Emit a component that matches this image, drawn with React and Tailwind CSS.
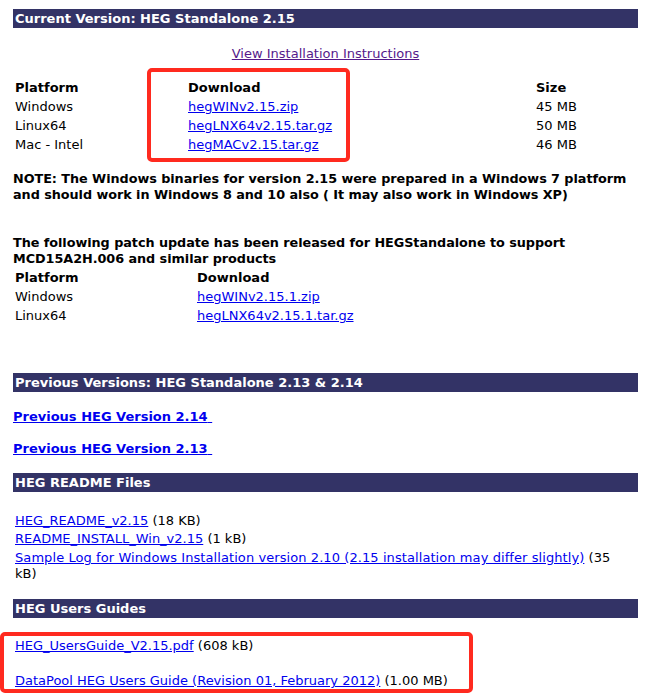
import React from "react";

const sans = { fontFamily: '"DejaVu Sans", Verdana, sans-serif' };

function Bar({ children, className = "" }) {
  return (
    <div
      className={`h-[19px] bg-[#333366] pl-[2px] text-[13px] font-bold leading-[19px] text-white ${className}`}
    >
      {children}
    </div>
  );
}

function A({ children, bold }) {
  return (
    <a
      href="#"
      className={`text-[#0000ee] underline ${bold ? "font-bold" : ""}`}
    >
      {children}
    </a>
  );
}

export default function App() {
  const current = [
    ["Windows", "hegWINv2.15.zip", "45 MB"],
    ["Linux64", "hegLNX64v2.15.tar.gz", "50 MB"],
    ["Mac - Intel", "hegMACv2.15.tar.gz", "46 MB"],
  ];
  const patch = [
    ["Windows", "hegWINv2.15.1.zip"],
    ["Linux64", "hegLNX64v2.15.1.tar.gz"],
  ];

  return (
    <div
      className="relative h-[695px] overflow-hidden bg-white pt-[9px] text-black"
      style={sans}
    >
      <div className="ml-[13px] w-[625px] text-[13px]">
        {/* CURRENT VERSION */}
        <Bar>Current Version: HEG Standalone 2.15</Bar>

        <div className="mt-[18px] text-center leading-[15px]">
          <a href="#" className="text-[#551a8b] underline">
            View Installation Instructions
          </a>
        </div>

        <div className="mt-[17px] pl-[2px]">
          <div className="flex h-[19px] items-center font-bold">
            <div className="w-[173px]">Platform</div>
            <div className="w-[348px]">Download</div>
            <div>Size</div>
          </div>
          {current.map((r) => (
            <div key={r[1]} className="flex h-[19px] items-center">
              <div className="w-[173px]">{r[0]}</div>
              <div className="w-[348px]">
                <A>{r[1]}</A>
              </div>
              <div>{r[2]}</div>
            </div>
          ))}
        </div>

        <div className="mt-[17px] text-[12.8px] font-bold leading-[16px] tracking-[-0.05px]">
          NOTE: The Windows binaries for version 2.15 were prepared in a Windows 7 platform and should work in Windows 8 and 10 also ( It may also work in Windows XP)
        </div>

        <div className="mt-[32px] text-[12.8px] font-bold leading-[16px] tracking-[-0.05px]">
          The following patch update has been released for HEGStandalone to support MCD15A2H.006 and similar products
        </div>

        <div className="mt-[1px] pl-[2px]">
          <div className="flex h-[19px] items-center font-bold">
            <div className="w-[182px]">Platform</div>
            <div>Download</div>
          </div>
          {patch.map((r) => (
            <div key={r[1]} className="flex h-[19px] items-center">
              <div className="w-[182px]">{r[0]}</div>
              <div>
                <A>{r[1]}</A>
              </div>
            </div>
          ))}
        </div>

        {/* PREVIOUS VERSIONS */}
        <Bar className="mt-[48px]">
          Previous Versions: HEG Standalone 2.13 &amp; 2.14
        </Bar>
        <div className="mt-[17px] leading-[16px]">
          <A bold>Previous HEG Version 2.14{"\u00a0"}</A>
        </div>
        <div className="mt-[16px] leading-[16px]">
          <A bold>Previous HEG Version 2.13{"\u00a0"}</A>
        </div>

        {/* README */}
        <Bar className="mt-[16px]">HEG README Files</Bar>
        <div className="mt-[19px] pl-[2px]">
          <div className="leading-[19px]">
            <A>HEG_README_v2.15</A> (18 KB)
          </div>
          <div className="leading-[18px]">
            <A>README_INSTALL_Win_v2.15</A> (1 kB)
          </div>
          <div className="mt-[2px] leading-[16px] tracking-[0.08px]">
            <A>
              Sample Log for Windows Installation version 2.10 (2.15 installation may differ slightly)
            </A>{" "}
            <span>(35</span>
            <br />
            <span>kB)</span>
          </div>
        </div>

        {/* USERS GUIDES */}
        <Bar className="mt-[17px]">HEG Users Guides</Bar>
        <div className="mt-[20px] pl-[2px] leading-[16px]">
          <A>HEG_UsersGuide_V2.15.pdf</A> (608 kB)
        </div>
        <div className="mt-[19px] pl-[2px] leading-[16px]">
          <A>DataPool HEG Users Guide (Revision 01, February 2012)</A> (1.00 MB)
        </div>
      </div>

      {/* annotation boxes */}
      <div className="absolute left-[147px] top-[68px] h-[94px] w-[203px] rounded-[5px] border-[4px] border-[#ff2a1f]" />
      <div className="absolute left-0 top-[632px] h-[61px] w-[473px] rounded-[5px] border-[4px] border-[#ff2a1f]" />
    </div>
  );
}
